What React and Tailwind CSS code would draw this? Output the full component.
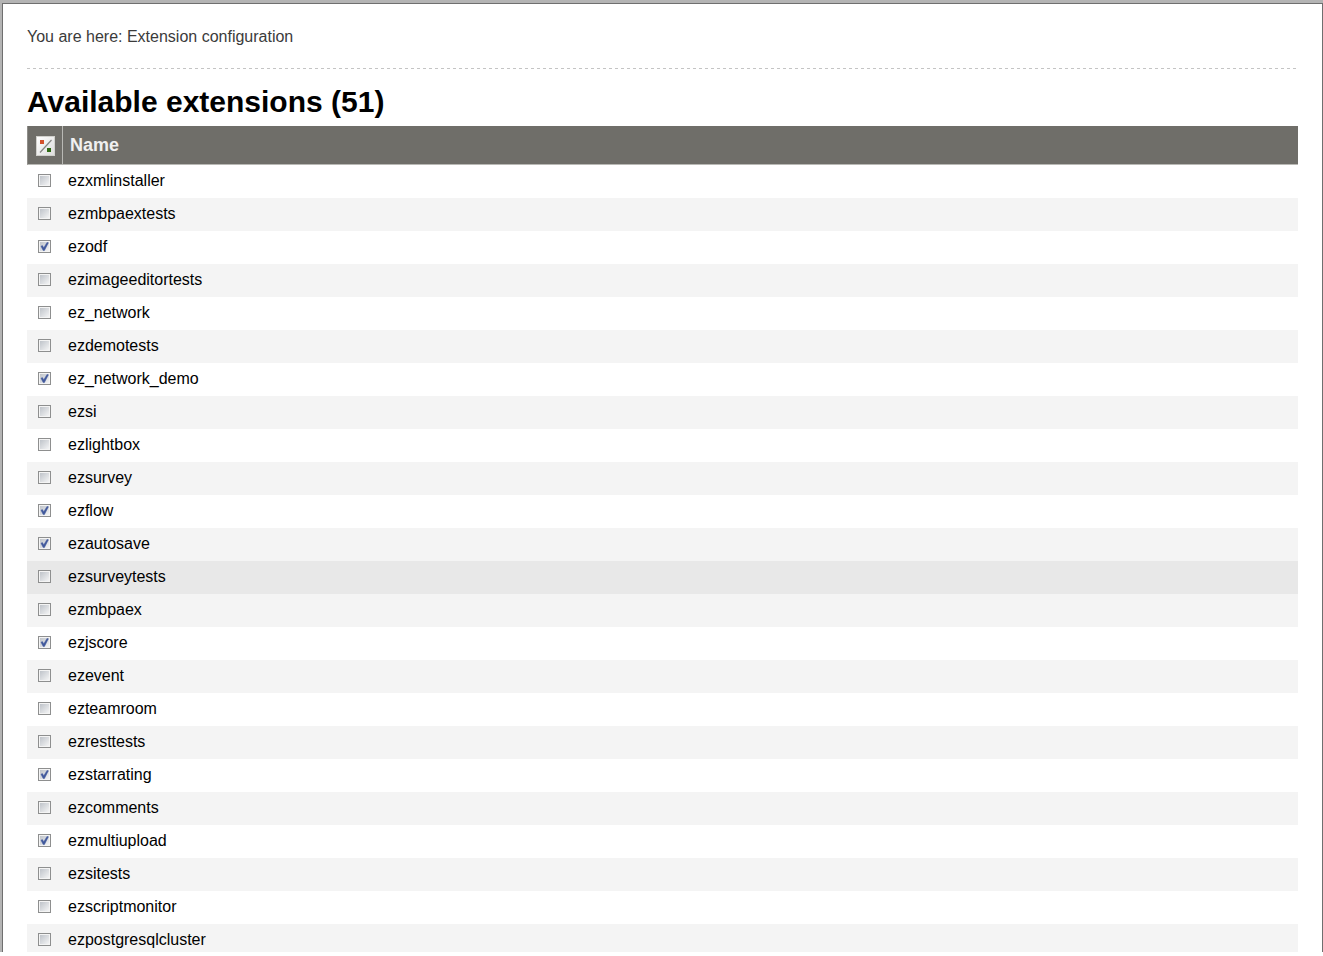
import React, { useState } from 'react';

const EXTENSIONS = [
  { name: 'ezxmlinstaller', active: false },
  { name: 'ezmbpaextests', active: false },
  { name: 'ezodf', active: true },
  { name: 'ezimageeditortests', active: false },
  { name: 'ez_network', active: false },
  { name: 'ezdemotests', active: false },
  { name: 'ez_network_demo', active: true },
  { name: 'ezsi', active: false },
  { name: 'ezlightbox', active: false },
  { name: 'ezsurvey', active: false },
  { name: 'ezflow', active: true },
  { name: 'ezautosave', active: true },
  { name: 'ezsurveytests', active: false },
  { name: 'ezmbpaex', active: false },
  { name: 'ezjscore', active: true },
  { name: 'ezevent', active: false },
  { name: 'ezteamroom', active: false },
  { name: 'ezresttests', active: false },
  { name: 'ezstarrating', active: true },
  { name: 'ezcomments', active: false },
  { name: 'ezmultiupload', active: true },
  { name: 'ezsitests', active: false },
  { name: 'ezscriptmonitor', active: false },
  { name: 'ezpostgresqlcluster', active: false },
];

const TOTAL = 51;

const InvertIcon = () => (
  <svg width="20" height="20" viewBox="0 0 20 20" className="block">
    <defs>
      <linearGradient id="invert-bg" x1="0" y1="0" x2="1" y2="1">
        <stop offset="0" stopColor="#ffffff" />
        <stop offset="1" stopColor="#dcdcdc" />
      </linearGradient>
    </defs>
    <rect x="0.5" y="0.5" width="18" height="19" fill="url(#invert-bg)" stroke="#d0d0cc" />
    <path d="M4 16.5L15.5 4" stroke="#858583" strokeWidth="1.2" />
    <rect x="4" y="4" width="4" height="4" fill="#d4502c" />
    <rect x="11" y="12" width="4" height="4" fill="#2f6b14" />
  </svg>
);

const Checkbox = ({ id, checked, onChange }) => (
  <span className="relative block size-[13px]">
    <input
      id={id}
      type="checkbox"
      checked={checked}
      onChange={onChange}
      className="peer block size-[13px] appearance-none border border-[#8e8f8f] bg-linear-to-br from-[#b9bec5] to-[#fafafa] shadow-[inset_0_0_0_1px_#f4f4f4]"
    />
    <svg
      viewBox="0 0 13 13"
      className="pointer-events-none absolute inset-0 hidden size-[13px] peer-checked:block"
    >
      <path d="M3 6.2L4.4 5.6L5.8 7.8L9 2.4L10.4 2.8L6.4 10.6H5.2Z" fill="#40589c" stroke="#40589c" strokeWidth="0.5" />
    </svg>
  </span>
);

const ExtensionRow = ({ extension, highlighted, onToggle, onHover }) => (
  <tr
    onMouseEnter={onHover}
    className={highlighted ? 'h-[33px] bg-[#e8e8e8]' : 'h-[33px] odd:bg-white even:bg-[#f4f4f4]'}
  >
    <td className="pb-[2px] pl-[11px]">
      <Checkbox id={extension.name} checked={extension.active} onChange={onToggle} />
    </td>
    <td className="pb-[2px] pl-[5px] text-base text-black">
      <label htmlFor={extension.name}>{extension.name}</label>
    </td>
  </tr>
);

const App = () => {
  const [extensions, setExtensions] = useState(EXTENSIONS);
  const [hovered, setHovered] = useState('ezsurveytests');

  const toggle = (name) => {
    setExtensions(extensions.map((e) => (e.name === name ? { ...e, active: !e.active } : e)));
  };

  const invertAll = () => {
    setExtensions(extensions.map((e) => ({ ...e, active: !e.active })));
  };

  return (
    <div className="h-screen overflow-hidden bg-white pb-1 font-['Liberation_Sans',Arial,sans-serif]">
      <div className="h-full overflow-hidden bg-[#b4b4b4] pt-[3px] pl-[2px]">
        <main className="h-full overflow-hidden border-t border-r border-l border-[#6f6f6f] bg-white px-6">
          <nav className="h-16 pt-[21px] text-base text-[#3b3b3b]">You are here: Extension configuration</nav>
          <div className="h-px bg-[repeating-linear-gradient(90deg,#c4c4c4_0_3px,transparent_3px_6px)]" />
          <h1 className="pt-[13px] pb-1 text-[30px] leading-10 font-bold text-black">
            Available extensions ({TOTAL})
          </h1>
          <table className="w-full table-fixed border-separate border-spacing-0">
            <thead>
              <tr className="h-[39px] bg-[#6f6e69]">
                <th className="w-9 border-r border-b border-l border-[#b9b9b5] border-l-[#8f8e8a] pt-[2px] pl-2">
                  <button type="button" aria-label="Invert selection" onClick={invertAll} className="block">
                    <InvertIcon />
                  </button>
                </th>
                <th className="border-b border-[#b9b9b5] pl-[7px] text-left text-lg font-bold text-[#f0f0f0]">
                  Name
                </th>
              </tr>
            </thead>
            <tbody>
              {extensions.map((extension) => (
                <ExtensionRow
                  key={extension.name}
                  extension={extension}
                  highlighted={hovered === extension.name}
                  onToggle={() => toggle(extension.name)}
                  onHover={() => setHovered(extension.name)}
                />
              ))}
            </tbody>
          </table>
        </main>
      </div>
    </div>
  );
};

export default App;
